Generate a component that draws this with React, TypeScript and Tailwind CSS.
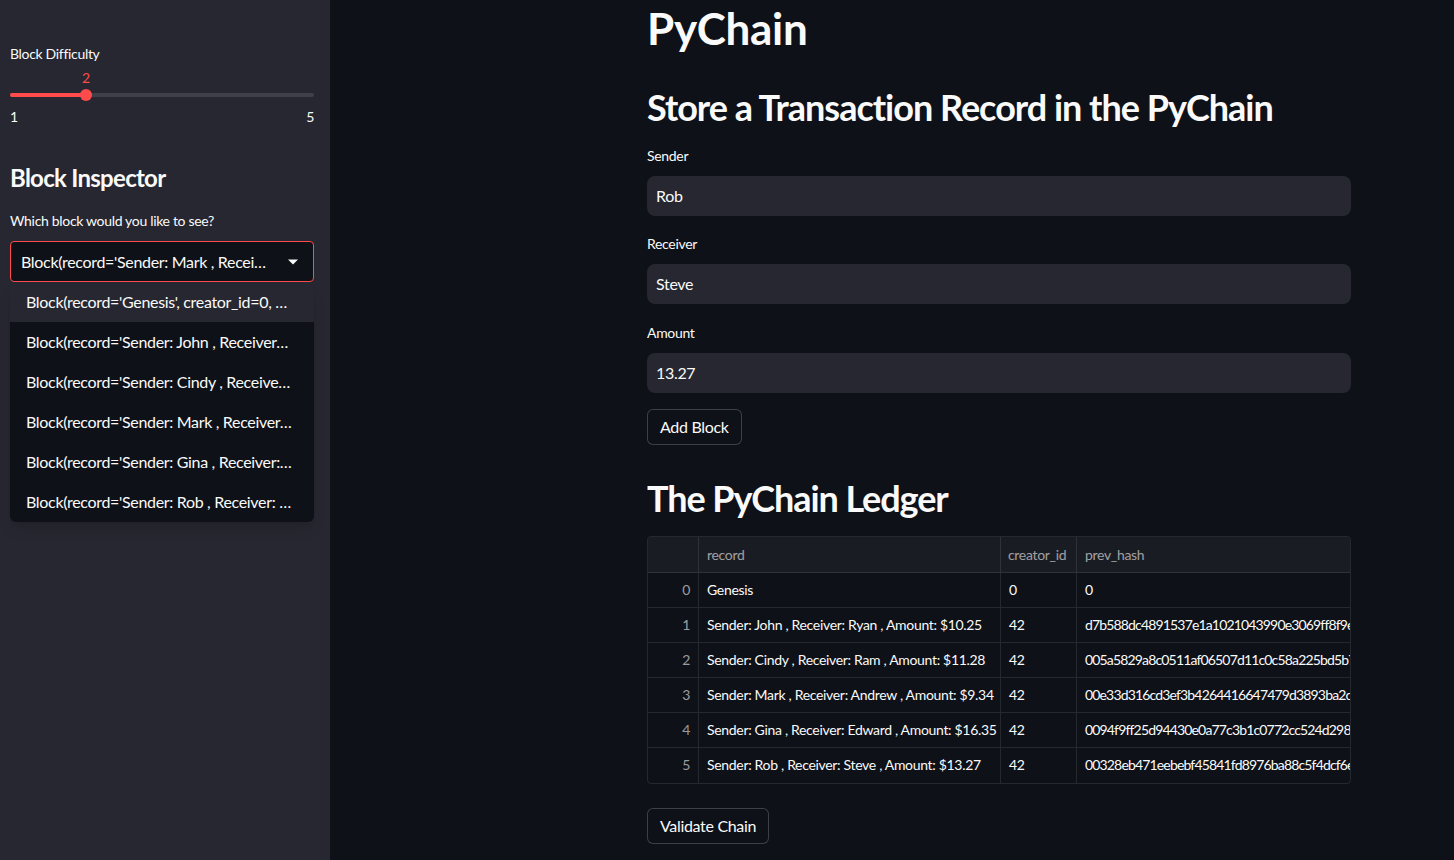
import React from "react";

const font = { fontFamily: "Lato, 'Noto Sans', sans-serif" };

const options = [
  "Block(record='Genesis', creator_id=0, …",
  "Block(record='Sender: John , Receiver…",
  "Block(record='Sender: Cindy , Receive…",
  "Block(record='Sender: Mark , Receiver…",
  "Block(record='Sender: Gina , Receiver:…",
  "Block(record='Sender: Rob , Receiver: …",
];

const rows = [
  ["0", "Genesis", "0", "0"],
  ["1", "Sender: John , Receiver: Ryan , Amount: $10.25", "42", "d7b588dc4891537e1a1021043990e3069ff8f9e4c2a1b7"],
  ["2", "Sender: Cindy , Receiver: Ram , Amount: $11.28", "42", "005a5829a8c0511af06507d11c0c58a225bd5b7e91f0c3"],
  ["3", "Sender: Mark , Receiver: Andrew , Amount: $9.34", "42", "00e33d316cd3ef3b4264416647479d3893ba2c7d0b8e14"],
  ["4", "Sender: Gina , Receiver: Edward , Amount: $16.35", "42", "0094f9ff25d94430e0a77c3b1c0772cc524d2981f6a3e0"],
  ["5", "Sender: Rob , Receiver: Steve , Amount: $13.27", "42", "00328eb471eebebf45841fd8976ba88c5f4dcf6e2d7a90"],
];

function Field({ label, value, mt }: { label: string; value: string; mt: string }) {
  return (
    <div className={mt}>
      <div className="text-[14px] leading-[20px] text-[#fafafa]">{label}</div>
      <div className="mt-[10px] h-[40px] rounded-[8px] bg-[#262730] flex items-center px-[9px] text-[16px] text-[#fafafa]">
        {value}
      </div>
    </div>
  );
}

export default function App() {
  return (
    <div className="flex w-[1454px] h-[860px] overflow-hidden bg-[#0e1117] text-[#fafafa] tracking-[-0.02em]" style={font}>
      {/* Sidebar */}
      <aside className="w-[330px] shrink-0 h-full bg-[#262730] px-[10px] pt-[44px]">
        <div className="w-[304px]">
          <div className="text-[14px] leading-[20px]">Block Difficulty</div>
          <div className="relative h-[41px] mt-[4px]">
            <div className="absolute left-[76px] top-0 -translate-x-1/2 text-[14px] leading-[20px] text-[#ff4b4b]">2</div>
            <div className="absolute left-0 right-0 top-[25px] h-[4px] rounded-full bg-[#3f404a]" />
            <div className="absolute left-0 w-[76px] top-[25px] h-[4px] rounded-full bg-[#ff4b4b]" />
            <div className="absolute left-[70px] top-[21px] w-[12px] h-[12px] rounded-full bg-[#ff4b4b]" />
          </div>
          <div className="flex justify-between text-[14px] leading-[20px] mt-[-2px]">
            <span>1</span>
            <span>5</span>
          </div>
          <h2 className="mt-[36px] text-[24px] leading-[30px] font-bold tracking-[-0.03em]">Block Inspector</h2>
          <div className="mt-[18px] text-[14px] leading-[20px]">Which block would you like to see?</div>
          <div className="relative mt-[10px]">
            <div className="h-[41px] rounded-[4px] border border-[#ff4b4b] bg-[#0e1117] flex items-center pl-[10px] pr-[12px] justify-between">
              <span className="text-[16px] whitespace-nowrap">Block(record='Sender: Mark , Recei…</span>
              <svg width="12" height="8" viewBox="0 0 12 8" className="mr-[2px]">
                <path d="M1 1.5 L6 6.5 L11 1.5 Z" fill="#fafafa" />
              </svg>
            </div>
            <div className="rounded-b-[6px] bg-[#0e1117] overflow-hidden shadow-lg">
              {options.map((o, i) => (
                <div
                  key={i}
                  className={`h-[40px] flex items-center pl-[16px] text-[16px] whitespace-nowrap ${i === 0 ? "bg-[#262730]" : ""}`}
                >
                  {o}
                </div>
              ))}
            </div>
          </div>
        </div>
      </aside>

      {/* Main */}
      <main className="flex-1 pl-[317px]">
        <div className="w-[704px] flex flex-col">
          <h1 className="mt-[2px] text-[44px] leading-[53px] font-bold">PyChain</h1>
          <h2 className="mt-[31px] text-[36px] leading-[43px] font-bold tracking-[-0.028em]">Store a Transaction Record in the PyChain</h2>
          <Field label="Sender" value="Rob" mt="mt-[17px]" />
          <Field label="Receiver" value="Steve" mt="mt-[18px]" />
          <Field label="Amount" value="13.27" mt="mt-[19px]" />
          <div className="mt-[16px]">
            <button className="h-[36px] px-[12px] rounded-[6px] border border-[#fafafa33] bg-[#0e1117] text-[16px]">
              Add Block
            </button>
          </div>
          <h2 className="mt-[32px] text-[36px] leading-[43px] font-bold tracking-[-0.03em]">The PyChain Ledger</h2>
          <div className="mt-[16px] border border-[#fafafa1a] rounded-[4px] overflow-hidden text-[14px]">
            <div className="flex h-[36px] bg-[#1a1c24] text-[#fafafa99] border-b border-[#fafafa1a]">
              <div className="w-[51px] shrink-0 border-r border-[#fafafa1a]" />
              <div className="w-[302px] shrink-0 border-r border-[#fafafa1a] flex items-center px-[8px] pb-[1px]">record</div>
              <div className="w-[76px] shrink-0 border-r border-[#fafafa1a] flex items-center px-[7px] pb-[1px]">creator_id</div>
              <div className="flex-1 flex items-center px-[8px] pb-[1px]">prev_hash</div>
            </div>
            {rows.map((r, i) => (
              <div key={i} className={`flex h-[35px] ${i < rows.length - 1 ? "border-b border-[#fafafa1a]" : ""}`}>
                <div className="w-[51px] shrink-0 border-r border-[#fafafa1a] flex items-center justify-end pr-[8px] pb-[2px] text-[#fafafa99]">
                  {r[0]}
                </div>
                <div className="w-[302px] shrink-0 border-r border-[#fafafa1a] flex items-center px-[8px] pb-[2px] whitespace-nowrap overflow-hidden">
                  {r[1]}
                </div>
                <div className="w-[76px] shrink-0 border-r border-[#fafafa1a] flex items-center px-[8px] pb-[2px]">{r[2]}</div>
                <div className="flex-1 min-w-0 flex items-center pl-[8px] pb-[2px] whitespace-nowrap overflow-hidden tracking-[-0.06em]">
                  {r[3]}
                </div>
              </div>
            ))}
          </div>
          <div className="mt-[24px]">
            <button className="h-[36px] px-[12px] rounded-[6px] border border-[#fafafa33] bg-[#0e1117] text-[16px]">
              Validate Chain
            </button>
          </div>
        </div>
      </main>
    </div>
  );
}
